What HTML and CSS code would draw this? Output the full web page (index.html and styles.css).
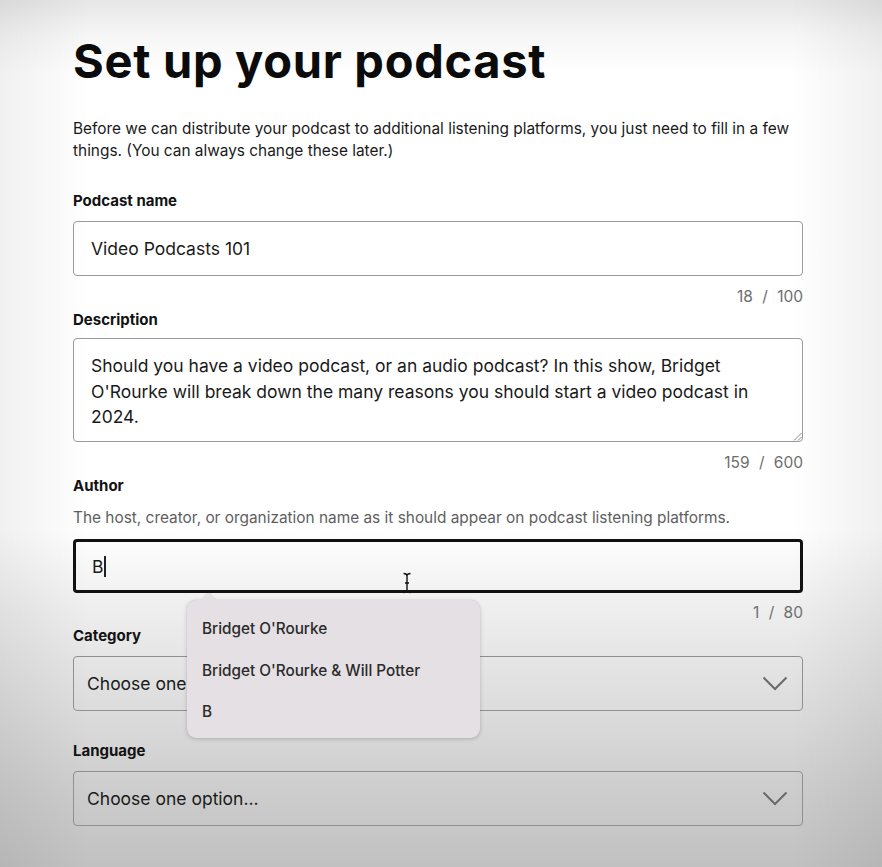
FILE: index.html
```html
<!DOCTYPE html>
<html lang="en">
<head>
<meta charset="utf-8">
<title>Set up your podcast</title>
<link rel="stylesheet" href="styles.css">
</head>
<body>
<main class="page">
  <h1 class="title">Set up your podcast</h1>
  <p class="intro">Before we can distribute your podcast to additional listening platforms, you just need to fill in a few things. (You can always change these later.)</p>

  <section class="field">
    <div class="label">Podcast name</div>
    <div class="box input">Video Podcasts 101</div>
    <div class="counter">18 / 100</div>
  </section>

  <section class="field desc">
    <div class="label">Description</div>
    <div class="box textarea">Should you have a video podcast, or an audio podcast? In this show, Bridget O'Rourke will break down the many reasons you should start a video podcast in 2024.
      <svg class="grip" width="9" height="9" viewBox="0 0 9 9"><path d="M8.5 1 L1 8.5 M8.5 5 L5 8.5" stroke="#8a8a8a" stroke-width="1" fill="none"/></svg>
    </div>
    <div class="counter">159 / 600</div>
  </section>

  <section class="field author">
    <div class="label">Author</div>
    <div class="help">The host, creator, or organization name as it should appear on podcast listening platforms.</div>
    <div class="box input focused">B<span class="caret"></span>
      <svg class="ibeam" width="10" height="22" viewBox="0 0 10 22"><path d="M1.5 1.5 Q5 1.5 5 4 Q5 1.5 8.5 1.5 M5 4 V18 M1.5 20.5 Q5 20.5 5 18 Q5 20.5 8.5 20.5 M3 11 H7" stroke="#111" stroke-width="1.4" fill="none"/></svg>
    </div>
    <div class="counter">1 / 80</div>
    <ul class="suggest">
      <li>Bridget O'Rourke</li>
      <li>Bridget O'Rourke &amp; Will Potter</li>
      <li>B</li>
    </ul>
  </section>

  <section class="field">
    <div class="label">Category</div>
    <div class="box select">Choose one option...
      <svg class="chev" width="26" height="15" viewBox="0 0 26 15"><path d="M1.5 1.5 L13 13 L24.5 1.5" stroke="#6a6a6a" stroke-width="2" fill="none"/></svg>
    </div>
  </section>

  <section class="field last">
    <div class="label">Language</div>
    <div class="box select">Choose one option...
      <svg class="chev" width="26" height="15" viewBox="0 0 26 15"><path d="M1.5 1.5 L13 13 L24.5 1.5" stroke="#6a6a6a" stroke-width="2" fill="none"/></svg>
    </div>
  </section>
</main>
</body>
</html>
```

FILE: styles.css
```css
html, body {
  margin: 0;
  padding: 0;
}
body {
  width: 882px;
  min-height: 867px;
  font-family: Inter, "Noto Sans", "Liberation Sans", sans-serif;
  color: #111;
  background:
    linear-gradient(to right, rgba(0,0,0,0.06) 0, rgba(0,0,0,0) 90px, rgba(0,0,0,0) 790px, rgba(0,0,0,0.06) 882px),
    linear-gradient(to bottom, #e6e6e6 0, #f6f6f6 35px, #ffffff 75px, #ffffff 530px, #eeeeee 610px, #dcdcdc 710px, #cdcdcd 790px, #c1c1c1 867px);
  overflow: hidden;
}
.page {
  width: 730px;
  padding: 31px 0 0 73px;
}
.title {
  margin: 0;
  font-size: 47px;
  line-height: 60px;
  font-weight: 700;
  letter-spacing: 0.7px;
  color: #0b0b0b;
}
.intro {
  margin: 27px 0 0;
  font-size: 15.4px;
  line-height: 22px;
  color: #1a1a1a;
}
.field {
  display: flex;
  flex-direction: column;
  position: relative;
}
.field:first-of-type { margin-top: 29px; }
.label {
  font-size: 15px;
  line-height: 20px;
  font-weight: 700;
  color: #121212;
  margin-bottom: 10px;
}
.desc .label { margin-bottom: 8px; }
.field + .field { margin-top: 3px; }
.box {
  box-sizing: border-box;
  position: relative;
  border: 1.5px solid #9a9a9a;
  border-radius: 4px;
  font-size: 17.5px;
  color: #1a1a1a;
}
.input {
  height: 55px;
  display: flex;
  align-items: center;
  padding: 0 17px;
}
.textarea {
  height: 104px;
  padding: 14px 17px 0;
  line-height: 25.5px;
}
.grip {
  position: absolute;
  right: 0;
  bottom: 0;
}
.counter {
  align-self: flex-end;
  margin-top: 11px;
  font-size: 15.5px;
  line-height: 20px;
  color: #6e6e6e;
  word-spacing: 5px;
}
.author .label { margin-bottom: 12px; }
.author .counter { margin-top: 10px; }
.help {
  font-size: 15.4px;
  line-height: 20px;
  color: #5e5e5e;
  margin-bottom: 11px;
}
.focused {
  height: 54px;
  border: 3px solid #111;
  padding: 0 16px;
}
.caret {
  display: inline-block;
  width: 1.5px;
  height: 21px;
  margin-left: 1px;
  background: #222;
}
.ibeam {
  position: absolute;
  left: 326px;
  top: 30px;
}
.select {
  height: 55px;
  display: flex;
  align-items: center;
  justify-content: space-between;
  padding: 0 14px 0 13px;
  border-color: #909090;
}
.field.last { margin-top: 30px; }
.suggest {
  position: absolute;
  left: 114px;
  top: 124px;
  width: 293px;
  height: 138px;
  margin: 0;
  padding: 8px 0 0;
  box-sizing: border-box;
  list-style: none;
  background: #e4e0e3;
  border-radius: 9px;
  box-shadow: 0 1px 4px rgba(0,0,0,0.18), 0 0 1px rgba(0,0,0,0.15);
  z-index: 5;
}
.suggest::before {
  content: "";
  position: absolute;
  left: 16px;
  top: -5px;
  width: 11px;
  height: 11px;
  background: #e4e0e3;
  transform: rotate(45deg);
  box-shadow: -1px -1px 1px rgba(0,0,0,0.06);
}
.suggest li {
  position: relative;
  padding: 0 15px;
  font-size: 15.3px;
  line-height: 41.5px;
  font-weight: 500;
  color: #2b2b2b;
}
```
